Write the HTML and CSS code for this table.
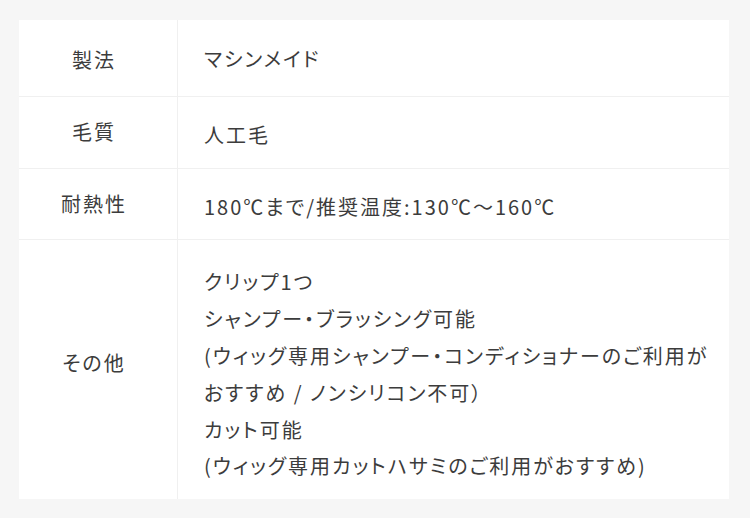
FILE: index.html
```html
<!DOCTYPE html>
<html lang="ja">
<head>
<meta charset="utf-8">
<link rel="stylesheet" href="styles.css">
</head>
<body>
<div class="wrap">
<table class="spec">
  <tr class="r1">
    <th>製法</th>
    <td>マシンメイド</td>
  </tr>
  <tr class="r2">
    <th>毛質</th>
    <td>人工毛</td>
  </tr>
  <tr class="r3">
    <th>耐熱性</th>
    <td>180℃まで/推奨温度:130℃〜160℃</td>
  </tr>
  <tr class="r4">
    <th>その他</th>
    <td>クリップ1つ<br>シャンプー・ブラッシング可能<br>(ウィッグ専用シャンプー・コンディショナーのご利用が<br>おすすめ / ノンシリコン不可）<br>カット可能<br>(ウィッグ専用カットハサミのご利用がおすすめ)</td>
  </tr>
</table>
</div>
</body>
</html>
```

FILE: styles.css
```css
html, body {
  margin: 0;
  padding: 0;
  background: #f6f6f6;
}
.wrap {
  padding: 20px 21px 20px 19px;
}
.spec {
  width: 710px;
  border-collapse: collapse;
  background: #fff;
  font-family: "Noto Sans CJK JP", sans-serif;
  font-size: 20px;
  color: #3c3c3c;
  letter-spacing: 2px;
  font-feature-settings: "palt";
  line-height: 36.8px;
}
.spec th, .spec td {
  border-top: 1px solid #f0f0f0;
  font-weight: normal;
  vertical-align: middle;
}
.spec tr:first-child th, .spec tr:first-child td {
  border-top: none;
}
.spec th {
  width: 150px;
  padding: 0 8px 0 0;
  text-align: center;
  border-right: 1px solid #f0f0f0;
}
.spec td {
  text-align: left;
  padding: 20px 20px 14px 26px;
}
.r1 th { padding-top: 4px; }
.r1 td { padding-top: 21px; padding-bottom: 18px; }
.r4 th { padding-bottom: 12px; }
.r4 td { padding-top: 24px; padding-bottom: 14px; }
```
